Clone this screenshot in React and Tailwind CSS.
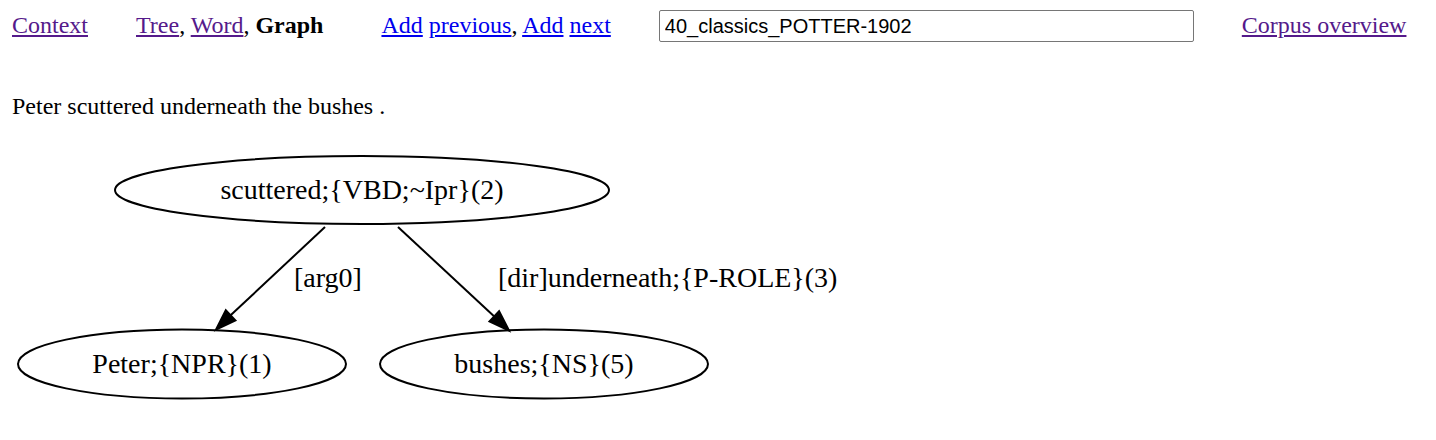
const serif = { fontFamily: '"Liberation Serif", "Times New Roman", serif' }

const nodes = [
  { id: 'scuttered', cx: 350, cy: 40, rx: 247, ry: 34, label: 'scuttered;{VBD;~Ipr}(2)' },
  { id: 'peter', cx: 170, cy: 214, rx: 164, ry: 34.5, label: 'Peter;{NPR}(1)' },
  { id: 'bushes', cx: 532, cy: 214, rx: 164, ry: 34.5, label: 'bushes;{NS}(5)' },
]

const edges = [
  {
    id: 'arg0',
    from: [313, 77],
    base: [218.6, 165.3],
    head: '204,179.5 223.4,170.4 213.8,160.2',
    label: '[arg0]',
    lx: 282,
    ly: 137,
  },
  {
    id: 'dir',
    from: [386, 77],
    base: [482.3, 166.4],
    head: '497,180.5 477.5,171.5 487.1,161.3',
    label: '[dir]underneath;{P-ROLE}(3)',
    lx: 486,
    ly: 137,
  },
]

function App() {
  return (
    <div className="min-h-[440px] bg-white px-3 pt-[10px] text-black" style={serif}>
      <nav className="flex h-8 items-center text-[24px] leading-[28px]">
        <a href="#" className="-mt-0.5 text-[#551a8b] underline">
          Context
        </a>
        <span className="-mt-0.5 ml-[48px]">
          <a href="#" className="text-[#551a8b] underline">
            Tree
          </a>
          ,{' '}
          <a href="#" className="text-[#551a8b] underline">
            Word
          </a>
          , <b>Graph</b>
        </span>
        <span className="-mt-0.5 ml-[58px]">
          <a href="#" className="text-[#0000ee] underline">
            Add
          </a>{' '}
          <a href="#" className="text-[#0000ee] underline">
            previous
          </a>
          ,{' '}
          <a href="#" className="text-[#0000ee] underline">
            Add
          </a>{' '}
          <a href="#" className="text-[#0000ee] underline">
            next
          </a>
        </span>
        <input
          type="text"
          defaultValue="40_classics_POTTER-1902"
          className="ml-[48px] h-8 w-[535px] rounded-[2px] border border-[#767676] px-[5px] text-[20px] text-black outline-none"
          style={{ fontFamily: '"Liberation Sans", Arial, sans-serif' }}
        />
        <a href="#" className="-mt-0.5 ml-[48px] text-[#551a8b] underline">
          Corpus overview
        </a>
      </nav>

      <p className="mt-[50px] text-[24px] leading-[28px]">Peter scuttered underneath the bushes .</p>

      <svg width="850" height="262" viewBox="0 0 850 262" className="mt-[30px] block" style={serif}>
        {nodes.map((node) => (
          <g key={node.id}>
            <ellipse
              cx={node.cx}
              cy={node.cy}
              rx={node.rx}
              ry={node.ry}
              fill="none"
              stroke="black"
              strokeWidth="2"
            />
            <text x={node.cx} y={node.cy + 8.6} textAnchor="middle" fontSize="28" fill="black">
              {node.label}
            </text>
          </g>
        ))}
        {edges.map((edge) => (
          <g key={edge.id}>
            <line
              x1={edge.from[0]}
              y1={edge.from[1]}
              x2={edge.base[0]}
              y2={edge.base[1]}
              stroke="black"
              strokeWidth="2"
            />
            <polygon points={edge.head} fill="black" stroke="black" strokeWidth="2" />
            <text x={edge.lx} y={edge.ly} fontSize="28" fill="black">
              {edge.label}
            </text>
          </g>
        ))}
      </svg>
    </div>
  )
}

export default App
